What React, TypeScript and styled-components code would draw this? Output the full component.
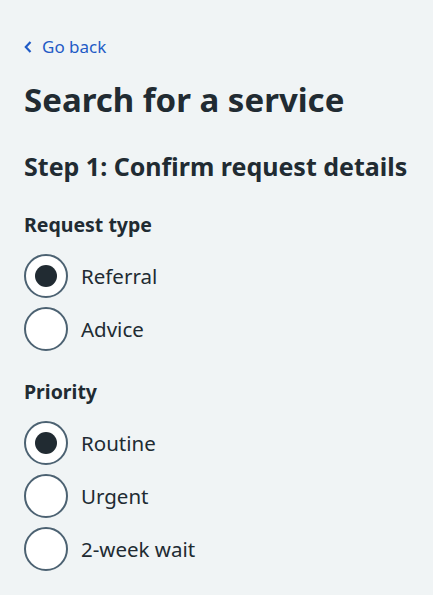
import React from "react";
import styled, { createGlobalStyle } from "styled-components";

const GlobalStyle = createGlobalStyle`
  html, body {
    margin: 0;
    padding: 0;
    background: #f0f4f5;
  }
  body {
    font-family: "Noto Sans", "Liberation Sans", Arial, sans-serif;
    color: #212b32;
  }
`;

const Page = styled.main`
  padding: 35px 24px 24px;
`;

const BackLink = styled.a`
  display: inline-flex;
  align-items: center;
  gap: 10px;
  font-size: 17px;
  line-height: 24px;
  color: #1f5bc6;
  text-decoration: none;
  cursor: pointer;
`;

const PageTitle = styled.h1`
  margin: 21px 0 0;
  font-size: 33px;
  line-height: 40px;
  font-weight: 700;
`;

const StepTitle = styled.h2`
  margin: 30px 0 0;
  font-size: 25px;
  line-height: 32px;
  font-weight: 700;
`;

const Fieldset = styled.fieldset<{ $first?: boolean }>`
  margin: ${(p) => (p.$first ? "29px" : "27px")} 0 0;
  padding: 0;
  border: 0;
`;

const Legend = styled.legend`
  padding: 0;
  font-size: 19.5px;
  line-height: 28px;
  font-weight: 700;
`;

const RadioList = styled.div`
  display: flex;
  flex-direction: column;
  gap: 9px;
  margin-top: 15px;
`;

const RadioItem = styled.label`
  display: flex;
  align-items: center;
  gap: 13px;
  min-height: 44px;
  font-size: 20.5px;
  cursor: pointer;
`;

const Circle = styled.span<{ $checked: boolean }>`
  box-sizing: border-box;
  flex: none;
  width: 44px;
  height: 44px;
  border: 2px solid #4c6272;
  border-radius: 50%;
  background: #fff;
  display: flex;
  align-items: center;
  justify-content: center;

  &::after {
    content: "";
    width: 22px;
    height: 22px;
    border-radius: 50%;
    background: #212b32;
    opacity: ${(p) => (p.$checked ? 1 : 0)};
  }
`;

interface RadioGroupProps {
  legend: string;
  options: string[];
  value: string;
  onChange: (v: string) => void;
  first?: boolean;
}

const RadioGroup = ({ legend, options, value, onChange, first }: RadioGroupProps) => (
  <Fieldset $first={first}>
    <Legend>{legend}</Legend>
    <RadioList>
      {options.map((opt) => (
        <RadioItem key={opt} onClick={() => onChange(opt)}>
          <Circle $checked={value === opt} />
          {opt}
        </RadioItem>
      ))}
    </RadioList>
  </Fieldset>
);

export default function App() {
  const [requestType, setRequestType] = React.useState("Referral");
  const [priority, setPriority] = React.useState("Routine");

  return (
    <>
      <GlobalStyle />
      <Page>
        <BackLink>
          <svg width="8" height="12" viewBox="0 0 8 12" aria-hidden="true">
            <path d="M6.5 1 L1.8 6 L6.5 11" fill="none" stroke="currentColor" strokeWidth="2.2" />
          </svg>
          Go back
        </BackLink>
        <PageTitle>Search for a service</PageTitle>
        <StepTitle>Step 1: Confirm request details</StepTitle>
        <RadioGroup
          first
          legend="Request type"
          options={["Referral", "Advice"]}
          value={requestType}
          onChange={setRequestType}
        />
        <RadioGroup
          legend="Priority"
          options={["Routine", "Urgent", "2-week wait"]}
          value={priority}
          onChange={setPriority}
        />
      </Page>
    </>
  );
}
